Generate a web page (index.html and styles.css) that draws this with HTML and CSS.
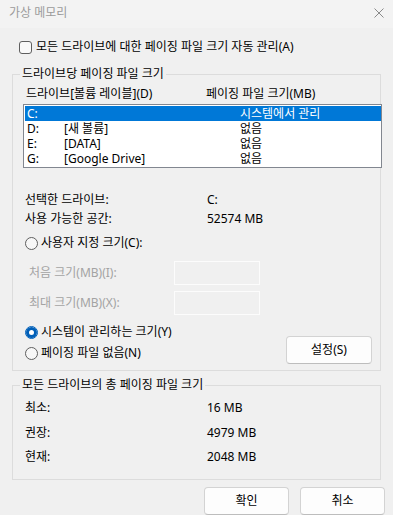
FILE: index.html
```html
<!DOCTYPE html>
<html lang="ko">
<head>
<meta charset="utf-8">
<title>가상 메모리</title>
<link rel="stylesheet" href="styles.css">
</head>
<body>
<div class="dialog">
  <header class="titlebar">
    <span class="title">가상 메모리</span>
    <svg class="close" width="10" height="10" viewBox="0 0 10 10"><path d="M0.5 0.5 L9.5 9.5 M9.5 0.5 L0.5 9.5" stroke="#8a8a8a" stroke-width="1" fill="none"/></svg>
  </header>
  <main class="content">
    <div class="check-row"><span class="checkbox"></span><span>모든 드라이브에 대한 페이징 파일 크기 자동 관리(A)</span></div>

    <fieldset class="group drives">
      <legend>드라이브당 페이징 파일 크기</legend>
      <div class="group-body drives-body">
        <div class="list-head"><span>드라이브[볼륨 레이블](D)</span><span>페이징 파일 크기(MB)</span></div>
        <div class="listbox">
          <div class="lrow selected"><span>C:</span><span></span><span>시스템에서 관리</span></div>
          <div class="lrow"><span>D:</span><span>[새 볼륨]</span><span>없음</span></div>
          <div class="lrow"><span>E:</span><span>[DATA]</span><span>없음</span></div>
          <div class="lrow"><span>G:</span><span>[Google Drive]</span><span>없음</span></div>
        </div>
        <div class="info info-first"><span>선택한 드라이브:</span><span>C:</span></div>
        <div class="info info-second"><span>사용 가능한 공간:</span><span>52574 MB</span></div>
        <div class="radio-row custom"><span class="radio"></span><span>사용자 지정 크기(C):</span></div>
        <div class="size-row size-first"><span class="dis">처음 크기(MB)(I):</span><span class="input"></span></div>
        <div class="size-row size-second"><span class="dis">최대 크기(MB)(X):</span><span class="input"></span></div>
        <div class="bottom">
          <div class="radios">
            <div class="radio-row"><span class="radio on"></span><span>시스템이 관리하는 크기(Y)</span></div>
            <div class="radio-row"><span class="radio"></span><span>페이징 파일 없음(N)</span></div>
          </div>
          <button class="btn set">설정(S)</button>
        </div>
      </div>
    </fieldset>

    <fieldset class="group totals">
      <legend>모든 드라이브의 총 페이징 파일 크기</legend>
      <div class="group-body totals-body">
        <div class="trow"><span>최소:</span><span>16 MB</span></div>
        <div class="trow"><span>권장:</span><span>4979 MB</span></div>
        <div class="trow"><span>현재:</span><span>2048 MB</span></div>
      </div>
    </fieldset>
  </main>
  <footer class="footer">
    <button class="btn action">확인</button>
    <button class="btn action">취소</button>
  </footer>
</div>
</body>
</html>
```

FILE: styles.css
```css
* { box-sizing: border-box; }
html, body { margin: 0; padding: 0; }
body {
  background: #f0f0f0;
  font-family: "Noto Sans", "Noto Sans CJK KR", sans-serif;
  font-size: 12px;
  color: #000;
  width: 393px;
  height: 515px;
  overflow: hidden;
}
.titlebar {
  height: 28px;
  background: #f3f3f3;
  display: flex;
  align-items: center;
  justify-content: space-between;
  padding: 0 9px 2px 9px;
}
.title { color: #9b9b9b; line-height: 16px; }
.close { display: block; }

.content { padding: 0 12px; }

.check-row {
  display: flex;
  align-items: center;
  gap: 4px;
  height: 16px;
  line-height: 16px;
  margin: 11px 0 0 7px;
}
.checkbox {
  width: 13px;
  height: 13px;
  border: 1px solid #5f5f5f;
  border-radius: 3px;
  background: #f9f9f9;
  flex: none;
}

.group {
  margin: 0;
  padding: 0;
  border: 1px solid #dcdcdc;
  min-width: 0;
}
.group legend {
  margin-left: 7px;
  padding: 0 2px;
  line-height: 16px;
  height: 16px;
}
.drives { margin-top: 11px; }
.totals { margin-top: 6px; }
.group-body { padding: 0 12px; }
.drives-body { padding-bottom: 6px; }
.totals-body { padding-top: 3px; padding-bottom: 9.5px; }

.list-head {
  display: grid;
  grid-template-columns: 180px 1fr;
  height: 16px;
  line-height: 16px;
  margin-top: 4px;
  padding-left: 1px;
}
.listbox {
  margin: 2px -14px 0 -2px;
  border: 1px solid #828790;
  background: #fff;
  padding: 1px 0 1px 1px;
}
.lrow {
  display: grid;
  grid-template-columns: 37px 176px 1fr;
  height: 15px;
  line-height: 15px;
  padding-left: 2px;
  white-space: nowrap;
}
.lrow.selected { background: #0078d7; color: #fff; }

.info, .trow {
  display: grid;
  grid-template-columns: 182px 1fr;
  align-items: center;
  height: 16px;
  line-height: 16px;
}
.info-first { margin-top: 24px; }
.info-second { margin-top: 3px; }
.trow { height: 24.5px; }

.radio-row {
  display: flex;
  align-items: center;
  gap: 3px;
  height: 16px;
  line-height: 16px;
}
.custom { margin-top: 8px; }
.radio {
  width: 13px;
  height: 13px;
  border-radius: 50%;
  border: 1px solid #5f5f5f;
  background: #f7f7f7;
  flex: none;
}
.radio.on {
  border-color: #005fb8;
  background: #fff;
  box-shadow: inset 0 0 0 3px #005fb8;
}

.size-row {
  display: grid;
  grid-template-columns: 149px 86px;
  align-items: center;
  height: 24px;
}
.size-first { margin-top: 10px; }
.size-second { margin-top: 6px; }
.dis { color: #a3a3a3; padding-left: 4px; line-height: 16px; }
.input {
  height: 24px;
  border: 1px solid #fcfcfc;
  background: #f0f0f0;
}

.bottom {
  display: flex;
  justify-content: space-between;
  height: 40px;
  margin-top: 9px;
}
.radios { display: flex; flex-direction: column; gap: 5px; }

.btn {
  font: inherit;
  color: #000;
  background: #fdfdfd;
  border: 1px solid #d3d3d3;
  border-bottom-color: #bdbdbd;
  border-radius: 4px;
  padding: 0;
  height: 28px;
  line-height: 26px;
  text-align: center;
}
.set {
  align-self: flex-end;
  width: 86px;
  margin-right: -4px;
}

.footer {
  display: flex;
  justify-content: flex-end;
  gap: 11px;
  margin-top: 7px;
  padding-right: 8px;
}
.action { width: 85px; }
```
